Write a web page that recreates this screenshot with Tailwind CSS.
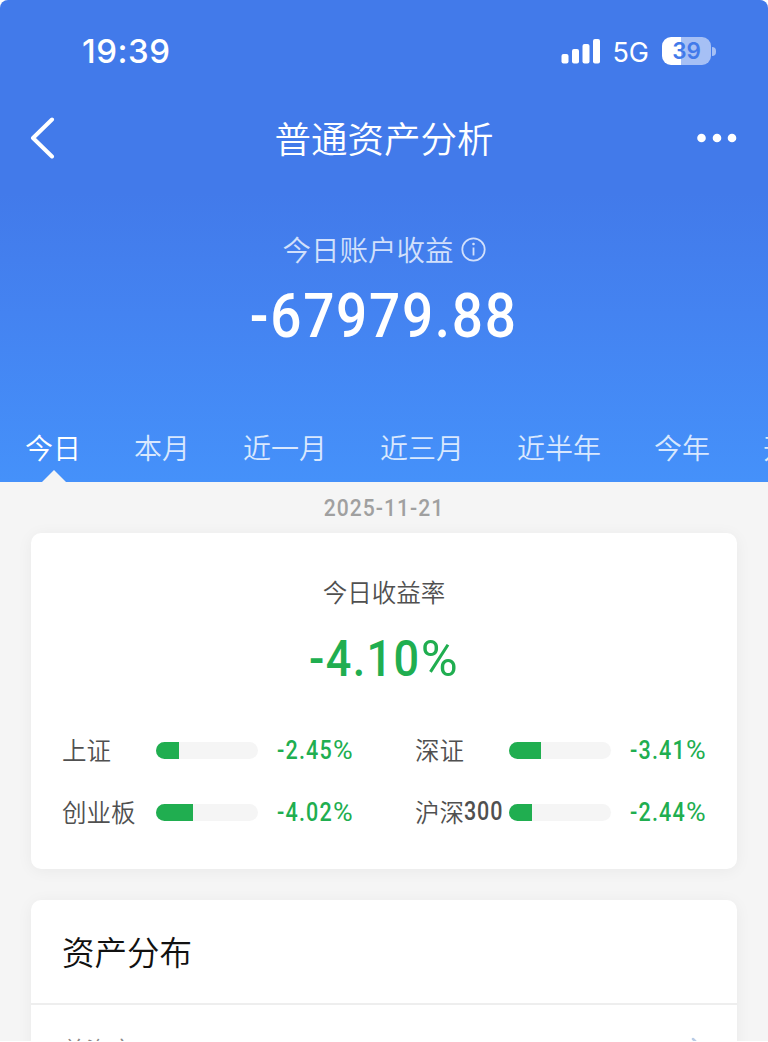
<!DOCTYPE html>
<html lang="zh-CN">
<head>
<meta charset="utf-8">
<title>普通资产分析</title>
<script src="https://cdn.jsdelivr.net/npm/@tailwindcss/browser@4"></script>
</head>
<body class="h-[1042px] w-[768px] overflow-hidden bg-white font-['Noto_Sans_CJK_SC',sans-serif]">
<div class="flex h-[1041px] flex-col overflow-hidden rounded-t-lg bg-[#f5f5f5]">

  <header class="flex h-[482px] shrink-0 flex-col overflow-hidden bg-[linear-gradient(180deg,#427aea_0%,#427aea_40%,#4483f1_65%,#4591fa_100%)] text-white">
    <!-- status bar -->
    <div class="flex h-[102px] items-center pr-[52px] pl-[82px] font-['Inter',sans-serif]">
      <span class="text-[33px] leading-none font-medium tracking-[0.500px]">19:39</span>
      <svg class="ml-auto h-7 w-10" viewBox="0 0 40 28" fill="currentColor">
        <rect x="1.500" y="17" width="7" height="9.500" rx="2"/><rect x="12" y="12" width="7" height="14.500" rx="2"/><rect x="22.500" y="7" width="7" height="19.500" rx="2"/><rect x="33" y="2" width="7" height="24.500" rx="2"/>
      </svg>
      <span class="mt-[3px] ml-3 text-[27px] leading-none">5G</span>
      <div class="ml-[13px] flex items-center gap-px">
        <div class="flex h-7 w-[49px] items-center justify-center rounded-[9px] bg-[linear-gradient(90deg,#fff_39%,#a6c0f5_39%)] text-[22.500px] leading-none font-semibold text-[#427aea]">39</div>
        <div class="h-[9px] w-[4px] rounded-r-full bg-[#a6c0f5]"></div>
      </div>
    </div>
    <!-- navigation -->
    <div class="flex h-[72px] items-center justify-between px-[30px]">
      <svg class="mb-px h-[42px] w-[44px]" viewBox="0 0 44 42" fill="none" stroke="currentColor" stroke-width="4" stroke-linecap="round" stroke-linejoin="round"><path d="M22 2.500 3 21l19 18.500"/></svg>
      <h1 class="mr-[3px] text-[36.500px] leading-none font-[350]">普通资产分析</h1>
      <svg class="h-[10px] w-[41px]" viewBox="0 0 41 10" fill="currentColor"><circle cx="4.500" cy="5" r="4.300"/><circle cx="20" cy="5" r="4.300"/><circle cx="35" cy="5" r="4.300"/></svg>
    </div>
    <!-- today's account profit -->
    <div class="mt-[55px] flex h-[40px] items-center justify-center gap-[7px] text-[#d2e0fb]">
      <span class="text-[28.500px] leading-none font-[350]">今日账户收益</span>
      <svg class="size-[25px]" viewBox="0 0 25 25" fill="none" stroke="currentColor" stroke-width="1.800"><circle cx="12.500" cy="12.500" r="11.200"/><path d="M12.500 10.500v8"/><circle cx="12.500" cy="7" r="1.300" fill="currentColor" stroke="none"/></svg>
    </div>
    <div class="flex h-[91px] items-center justify-center pt-[3px]">
      <span class="scale-x-90 font-['Roboto',sans-serif] text-[61px] leading-none font-medium tracking-[1.900px]">-67979.88</span>
    </div>
    <!-- period tabs -->
    <nav class="mt-[53px] flex grow gap-[53px] pl-[25px] text-[28px] leading-[69px] font-[350] whitespace-nowrap text-[#d9e8fe]">
      <div class="relative text-white">今日
        <svg class="absolute bottom-0 left-[17px] h-3 w-6" viewBox="0 0 24 12" fill="#f5f5f5"><path d="m0 12 12-12 12 12z"/></svg>
      </div>
      <div>本月</div><div>近一月</div><div>近三月</div><div>近半年</div><div>今年</div><div>开户以来</div>
    </nav>
  </header>

  <div class="flex h-[51px] shrink-0 items-center justify-center pt-px font-['Roboto',sans-serif] text-[24.500px] text-[#a0a0a0]"><span class="scale-x-[0.86] font-medium tracking-[1.200px]">2025-11-21</span></div>

  <main class="flex flex-col gap-[31px] px-[31px]">
    <section class="h-[336px] rounded-[10px] bg-white px-[31px] text-[#505050] shadow-[0_2px_16px_rgba(0,0,0,0.05)]">
      <h2 class="pt-[40px] text-center text-[24.500px] leading-[38px] font-[350]">今日收益率</h2>
      <div class="flex h-[96px] items-center justify-center font-['Roboto',sans-serif] text-[50px] leading-none font-medium text-[#20ae50]">
        <span class="mr-[5px] flex scale-x-90 tracking-[1.500px]">-4.10<span class="origin-left scale-x-[1.12] font-normal">%</span></span>
      </div>
      <div class="mt-[12px] grid grid-cols-[353px_1fr] text-[24.500px] leading-[62px] font-[350]">
        <div class="flex items-center"><span class="w-[94px]">上证</span><div class="h-[17px] w-[102px] overflow-hidden rounded-full bg-[#f5f5f5]"><div class="h-full bg-[#20ae50]" style="width:23px"></div></div><span class="mt-px ml-[19px] flex origin-left scale-x-[0.86] font-['Roboto',sans-serif] text-[25px] leading-[61px] font-medium tracking-[1.400px] text-[#20ae50]">-2.45<span class="origin-left scale-x-125 font-normal">%</span></span></div>
        <div class="flex items-center"><span class="w-[94px]">深证</span><div class="h-[17px] w-[102px] overflow-hidden rounded-full bg-[#f5f5f5]"><div class="h-full bg-[#20ae50]" style="width:32px"></div></div><span class="mt-px ml-[19px] flex origin-left scale-x-[0.86] font-['Roboto',sans-serif] text-[25px] leading-[61px] font-medium tracking-[1.400px] text-[#20ae50]">-3.41<span class="origin-left scale-x-125 font-normal">%</span></span></div>
        <div class="flex items-center"><span class="w-[94px]">创业板</span><div class="h-[17px] w-[102px] overflow-hidden rounded-full bg-[#f5f5f5]"><div class="h-full bg-[#20ae50]" style="width:37px"></div></div><span class="mt-px ml-[19px] flex origin-left scale-x-[0.86] font-['Roboto',sans-serif] text-[25px] leading-[61px] font-medium tracking-[1.400px] text-[#20ae50]">-4.02<span class="origin-left scale-x-125 font-normal">%</span></span></div>
        <div class="flex items-center"><span class="flex w-[94px] whitespace-nowrap">沪深<span class="origin-left scale-x-[0.86] font-['Roboto',sans-serif] text-[25px] font-medium tracking-[1px]">300</span></span><div class="h-[17px] w-[102px] shrink-0 overflow-hidden rounded-full bg-[#f5f5f5]"><div class="h-full bg-[#20ae50]" style="width:23px"></div></div><span class="mt-px ml-[19px] flex origin-left scale-x-[0.86] font-['Roboto',sans-serif] text-[25px] leading-[61px] font-medium tracking-[1.400px] text-[#20ae50]">-2.44<span class="origin-left scale-x-125 font-normal">%</span></span></div>
      </div>
    </section>

    <section class="h-[200px] rounded-[10px] bg-white shadow-[0_2px_16px_rgba(0,0,0,0.05)]">
      <h2 class="h-[105px] border-b-2 border-[#eee] px-[31px] text-[32.500px] leading-[101px] font-[350] text-[#111]">资产分布</h2>
      <div class="flex items-start justify-between pt-[26px] pr-[33px] pl-[31px] text-[24px] leading-[36px] font-[350] text-[#888]">
        <span>总资产</span>
        <svg class="mt-[6px] h-[22px] w-[13px]" viewBox="0 0 13 22" fill="none" stroke="#b9cce6" stroke-width="2.500" stroke-linecap="round"><path d="m2 2 9 9-9 9"/></svg>
      </div>
    </section>
  </main>
</div>
</body>
</html>
